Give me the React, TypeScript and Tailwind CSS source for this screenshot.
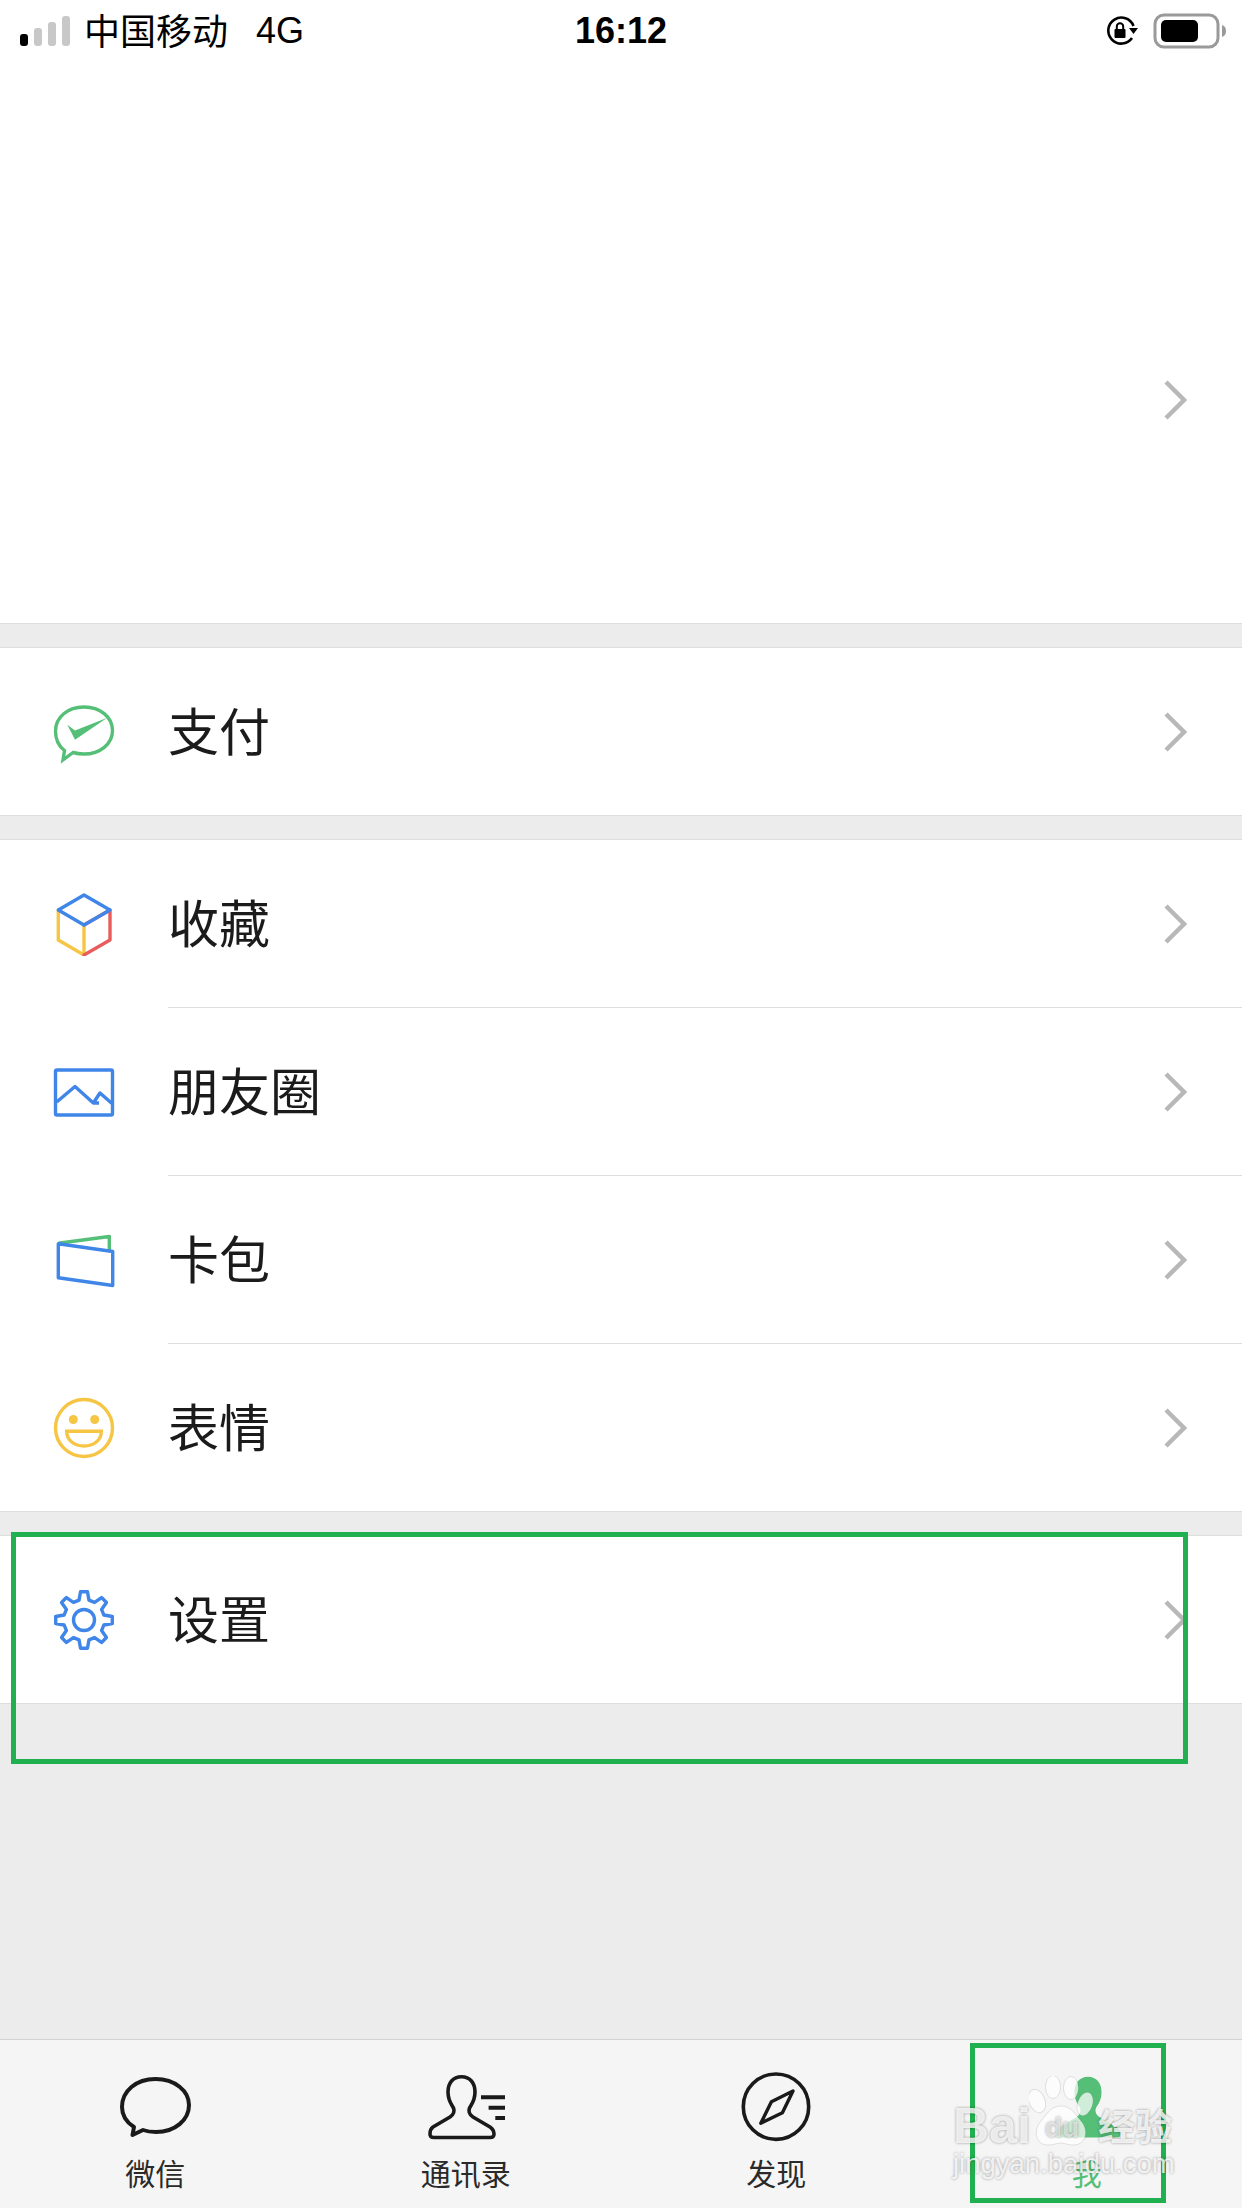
const blue = "#3f86e8";
const green = "#55bf77";
const yellow = "#f7c544";
const red = "#e85c5c";

// gear outline, 8 teeth
const gearPath = () => {
  const pt = (r: number, deg: number) => {
    const a = (deg * Math.PI) / 180;
    return `${(32 + r * Math.cos(a)).toFixed(2)} ${(32 + r * Math.sin(a)).toFixed(2)}`;
  };
  let d = "";
  for (let i = 0; i < 8; i++) {
    const a = i * 45 - 90;
    d += `${i === 0 ? "M" : "L"}${pt(20.5, a - 14)} L${pt(28.5, a - 7)} L${pt(28.5, a + 7)} L${pt(20.5, a + 14)} `;
  }
  return d + "Z";
};

const icons: Record<string, React.ReactNode> = {
  pay: (
    <>
      <path
        d="M11 60 L12.5 50.5 C6.5 46 3.5 39 3.5 31 C3.5 17 16 7 32 7 C48 7 60.5 17 60.5 30.5 C60.5 44 48 54 32 54 C28 54 24.5 53.5 21 52.5 Z"
        fill="none"
        stroke={green}
        strokeWidth="3.4"
        strokeLinejoin="miter"
      />
      <path d="M15.3 24.8 L23 30.5 L55.3 17.8 L23 39.8 Z" fill={green} />
    </>
  ),
  cube: (
    <g fill="none" strokeWidth="3.4" strokeLinecap="round" strokeLinejoin="round">
      <path d="M6.3 48 L32 63 L32 33 M6.3 18 L6.3 48" stroke={yellow} />
      <path d="M32 63 L58 48 L58 18 L32 33" stroke={red} />
      <path d="M32 3 L58 18 L32 33 L6.3 18 Z" stroke={blue} />
    </g>
  ),
  moments: (
    <g fill="none" stroke={blue} strokeWidth="3.4" strokeLinejoin="round">
      <rect x="3.5" y="10" width="57" height="45" rx="1.5" />
      <path d="M4.7 42 L23 26.5 L41.3 43 L47 43 M41.3 43 L48 33 L59.7 43.2" />
    </g>
  ),
  wallet: (
    <g fill="none" strokeWidth="3.4" strokeLinejoin="round">
      <path d="M6.3 15.2 L57.3 8.5 L57.3 22.5" stroke={green} />
      <path d="M6.3 15.8 L60.7 23.5 L60.7 57.5 L6.3 49.8 Z" stroke={blue} />
    </g>
  ),
  smile: (
    <g fill="none" stroke={yellow} strokeWidth="3.4">
      <circle cx="32" cy="32" r="28.5" />
      <circle cx="21.3" cy="23.5" r="4.5" fill={yellow} stroke="none" />
      <circle cx="42.7" cy="23.5" r="4.5" fill={yellow} stroke="none" />
      <path d="M14.7 35.2 H49.3 C49.3 45 41 50 32 50 C23 50 14.7 45 14.7 35.2 Z" />
    </g>
  ),
  gear: (
    <g fill="none" stroke={blue} strokeWidth="3.4" strokeLinejoin="round">
      <path d={gearPath()} />
      <circle cx="32" cy="32" r="10.5" />
    </g>
  ),
};

const person =
  "M35.5 8.7 C27 8.7 22 15 22 24 C22 33 26 37 27.5 40 C29 44 27 47 24 49 L7 59 C4 61 4 64 4 66 C4 68.5 5 69.5 8 69.5 H64 C67 69.5 68 68.5 68 66 C68 64 67 61 64 59 L47 49 C44 47 42 44 43.5 40 C45 37 49 33 49 24 C49 15 44 8.7 35.5 8.7 Z";

const Chevron = () => (
  <svg width="24" height="40" viewBox="0 0 24 40" className="shrink-0">
    <path d="M3 2 L21 20 L3 38" fill="none" stroke="#b8b8b8" strokeWidth="4.5" />
  </svg>
);

const Row = ({ icon, label, divider }: { icon: string; label: string; divider?: boolean }) => (
  <>
    <div className="flex h-[167px] items-center pl-[52px] pr-[55px]">
      <svg width="64" height="64" viewBox="0 0 64 64" className="shrink-0">
        {icons[icon]}
      </svg>
      <span className="ml-[52px] flex-1 pb-[4px] text-[51px] leading-none text-[#1b1b1b]">{label}</span>
      <Chevron />
    </div>
    {divider && <div className="ml-[168px] h-px bg-[#dedede]" />}
  </>
);

const Tab = ({ label, active, children }: { label: string; active?: boolean; children: React.ReactNode }) => (
  <div className="flex flex-col items-center pt-[28px]">
    <svg width="80" height="80" viewBox="0 0 80 80">
      {children}
    </svg>
    <span className={`mt-[9px] text-[30px] leading-[30px] ${active ? "text-[#55bf77]" : "text-[#2a2a2a]"}`}>
      {label}
    </span>
  </div>
);

export default function App() {
  return (
    <div className="relative flex h-[2208px] w-[1242px] flex-col overflow-hidden bg-[#ececec] font-['Noto_Sans_CJK_SC','Liberation_Sans',sans-serif]">
      {/* header */}
      <div className="border-b border-[#dedede] bg-white">
        <div className="flex h-[60px] items-center px-[20px] pt-[2px] text-black">
          <div className="flex flex-1 items-center">
            <div className="flex items-end gap-[6px]">
              <div className="h-[12px] w-[8px] rounded-[3px] bg-black" />
              <div className="h-[18px] w-[8px] rounded-[3px] bg-[#c8c8c8]" />
              <div className="h-[24px] w-[8px] rounded-[3px] bg-[#c8c8c8]" />
              <div className="h-[30px] w-[8px] rounded-[3px] bg-[#c8c8c8]" />
            </div>
            <span className="ml-[14px] pb-[5px] text-[36px] leading-none">中国移动</span>
            <span className="ml-[28px] font-['Liberation_Sans'] text-[36px] leading-none">4G</span>
          </div>
          <span className="font-['Liberation_Sans'] text-[36px] font-bold leading-none">16:12</span>
          <div className="flex flex-1 items-center justify-end">
            <svg width="36" height="30" viewBox="0 0 36 30">
              <path d="M27 22 A13 13 0 1 1 28.5 10" fill="none" stroke="#000" strokeWidth="2.6" />
              <path d="M24 12 H33 L28.5 18 Z" fill="#000" />
              <rect x="9.5" y="13" width="11" height="9" rx="1" fill="#000" />
              <path d="M11.8 13 V10.5 A3.2 3.2 0 0 1 18.2 10.5 V13" fill="none" stroke="#000" strokeWidth="2" />
            </svg>
            <svg width="76" height="36" viewBox="0 0 76 36" className="ml-[12px] mr-[-7px]">
              <rect x="2" y="2" width="63" height="32" rx="9" fill="none" stroke="#9a9a9a" strokeWidth="3" />
              <rect x="8" y="7" width="37" height="22" rx="5" fill="#000" />
              <path d="M69 12 C72 13 73 15 73 18 C73 21 72 23 69 24 Z" fill="#9a9a9a" />
            </svg>
          </div>
        </div>
        <div className="flex h-[563px] items-start justify-end pr-[55px] pt-[320px]">
          <Chevron />
        </div>
      </div>

      <div className="mt-[23px] border-y border-[#dedede] bg-white">
        <Row icon="pay" label="支付" />
      </div>

      <div className="mt-[23px] border-y border-[#dedede] bg-white">
        <Row icon="cube" label="收藏" divider />
        <Row icon="moments" label="朋友圈" divider />
        <Row icon="wallet" label="卡包" divider />
        <Row icon="smile" label="表情" />
      </div>

      <div className="mt-[23px] border-y border-[#dedede] bg-white">
        <Row icon="gear" label="设置" />
      </div>

      <div className="flex-1" />

      {/* tab bar */}
      <div className="grid h-[169px] grid-cols-4 border-t border-[#d3d3d3] bg-[#f5f5f5]">
        <Tab label="微信">
          <path
            d="M17.5 67 L19 59 C11 54 7 47 7 39 C7 23 21 11 40.5 11 C60 11 74 23 74 37 C74 52 60 64 41 64 C36 64 32 63.5 28 62 Z"
            fill="none"
            stroke="#1a1a1a"
            strokeWidth="4"
            strokeLinejoin="round"
          />
        </Tab>
        <Tab label="通讯录">
          <path d={person} fill="none" stroke="#1a1a1a" strokeWidth="3.6" />
          <path d="M55 29.3 H79 M62.6 39.7 H79 M69.3 50 H79" stroke="#1a1a1a" strokeWidth="4" />
        </Tab>
        <Tab label="发现">
          <circle cx="40" cy="38.7" r="32.7" fill="none" stroke="#1a1a1a" strokeWidth="3.6" />
          <path
            d="M57 23 L46.4 44.7 L24.8 55.3 L35.4 33.7 Z"
            fill="none"
            stroke="#1a1a1a"
            strokeWidth="3.4"
            strokeLinejoin="round"
          />
        </Tab>
        <Tab label="我" active>
          <path d={person} fill={green} transform="translate(5.5 0)" />
        </Tab>
      </div>

      {/* green annotation frames */}
      <div className="pointer-events-none absolute left-[11px] top-[1532px] h-[232px] w-[1177px] border-[5px] border-[#21b04f]" />
      <div className="pointer-events-none absolute left-[970px] top-[2043px] h-[160px] w-[196px] border-[5px] border-[#21b04f]" />

      {/* baidu watermark */}
      <div className="pointer-events-none absolute left-[953px] top-[2076px] h-[110px] w-[226px] font-['Liberation_Sans'] text-white/80 [text-shadow:0_0_3px_rgba(0,0,0,0.4)]">
        <span className="absolute left-0 top-[25px] text-[50px] font-bold leading-none">Bai</span>
        <svg width="64" height="76" viewBox="0 0 64 76" className="absolute left-[76px] top-0">
          <g fill="#fff" fillOpacity="0.72" stroke="#000" strokeOpacity="0.1">
            <ellipse cx="8" cy="25" rx="8" ry="12" transform="rotate(-20 8 25)" />
            <ellipse cx="24" cy="11" rx="7.5" ry="11.5" />
            <ellipse cx="42" cy="12" rx="7.5" ry="11.5" />
            <ellipse cx="56" cy="28" rx="7.5" ry="12" transform="rotate(18 56 28)" />
            <path d="M32 30 C42 30 46 38 52 45 C60 54 58 69 44 69 C38 69 36 67 32 67 C28 67 25 69 19 69 C6 69 4 54 12 45 C18 38 22 30 32 30 Z" />
          </g>
        </svg>
        <span className="absolute left-[92px] top-[38px] text-[28px] font-bold leading-none text-white/60">du</span>
        <span className="absolute left-[145px] top-[31px] font-['Noto_Sans_CJK_SC'] text-[37px] font-bold leading-none">经验</span>
        <span className="absolute left-0 top-[74px] whitespace-nowrap text-[27.5px] leading-none">jingyan.baidu.com</span>
      </div>
    </div>
  );
}
